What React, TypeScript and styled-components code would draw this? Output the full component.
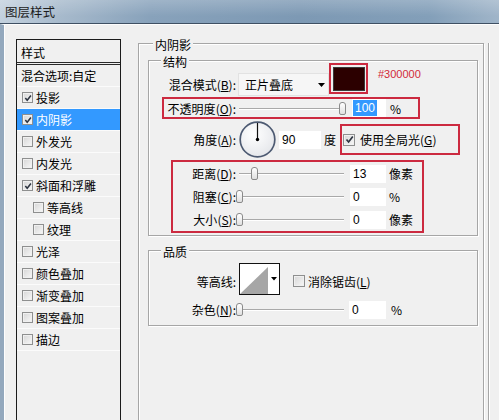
import React, { ReactElement, ReactNode } from "react";
import styled, { createGlobalStyle } from "styled-components";

const GlobalStyle = createGlobalStyle`
  html, body {
    margin: 0;
    padding: 0;
    background: #f0f0f0;
  }
  body {
    width: 499px;
    height: 420px;
    overflow: hidden;
    font-family: "Noto Sans CJK SC", "Liberation Sans", sans-serif;
    font-size: 12px;
    color: #000;
  }
  u {
    text-underline-offset: 1px;
  }
`;

const Window = styled.div`
  width: 499px;
  height: 420px;
  display: flex;
  flex-direction: column;
  overflow: hidden;
`;

const TitleBar = styled.div`
  height: 23px;
  flex-shrink: 0;
  display: flex;
  align-items: center;
  padding-left: 5px;
  font-size: 12.5px;
  color: #1c1c1c;
  border-bottom: 1px solid #3f5063;
  background:
    linear-gradient(to bottom, rgba(255, 255, 255, 0.2), rgba(255, 255, 255, 0) 70%),
    linear-gradient(to right, #c3d1de 0%, #a7bacc 12%, #88a2bb 30%, #7d99b4 60%, #839fb9 86%, #a0b5c9 100%);
`;

const Body = styled.div`
  flex: 1;
  display: flex;
  min-height: 0;
  border-left: 4px solid #93a8bd;
  border-top: 1px solid #fdfdfd;
  box-shadow: inset 1px 0 0 #fdfdfd;
  background: #f0f0f0;
`;

/* ---------- left style list ---------- */

const StyleList = styled.div`
  width: 103px;
  margin: 14px 0 0 12px;
  border: 1px solid #1b1b1b;
  border-bottom: none;
  flex-shrink: 0;
`;

const ListHeader = styled.div`
  height: 22px;
  line-height: 26px;
  padding-left: 4px;
  border-bottom: 3px double #2a2a2a;
`;

const ListRow = styled.div<{ $selected?: boolean; $indent: number }>`
  height: 21px;
  line-height: 21px;
  display: flex;
  align-items: center;
  gap: 3px;
  padding-left: ${(p) => p.$indent}px;
  border-bottom: 1px solid #fbfbfb;
  background: ${(p) => (p.$selected ? "#3399ff" : "transparent")};
  color: ${(p) => (p.$selected ? "#fff" : "#000")};
  white-space: nowrap;
`;

const Box = styled.span<{ $size: number }>`
  width: ${(p) => p.$size - 2}px;
  height: ${(p) => p.$size - 2}px;
  flex-shrink: 0;
  display: inline-flex;
  align-items: center;
  justify-content: center;
  border: 1px solid #8e8f8f;
  background: linear-gradient(135deg, #d6d6d6, #f8f8f8);
  box-shadow: inset 0 0 0 1px #f0f0f0;
`;

function Checkbox({ checked, size }: { checked?: boolean; size: number }): ReactElement {
  return (
    <Box $size={size}>
      {checked && (
        <svg width={size - 3} height={size - 3} viewBox="0 0 9 9">
          <polyline points="1.5,4.5 3.6,7 7.8,1.6" fill="none" stroke="#2d3440" strokeWidth="1.7" />
        </svg>
      )}
    </Box>
  );
}

/* ---------- right panel ---------- */

const Main = styled.div`
  display: flex;
  margin: 18px 0 0 17px;
`;

const Group = styled.div`
  display: flex;
  flex-direction: column;
  border: 1px solid #a6a6a6;
  box-shadow: inset 1px 1px 0 #fff, 1px 1px 0 #fff;
`;

const OuterGroup = styled(Group)`
  width: 330px;
  min-height: 420px;
  padding: 0 5px 0 9px;
`;

const InnerGroup = styled(Group)<{ $top: number; $bottom: number }>`
  margin-top: ${(p) => p.$top}px;
  padding-bottom: ${(p) => p.$bottom}px;
`;

const Legend = styled.div<{ $offset: number }>`
  align-self: flex-start;
  height: 16px;
  line-height: 16px;
  margin: -7px 0 -9px ${(p) => p.$offset}px;
  padding: 0 2px;
  background: #f0f0f0;
`;

const RightRail = styled.div`
  width: 0;
  margin-left: 4px;
  border-left: 1px solid #a6a6a6;
  box-shadow: 1px 0 0 #fff;
`;

const Label = styled.div<{ $width: number; $lift?: number }>`
  width: ${(p) => p.$width}px;
  flex-shrink: 0;
  text-align: right;
  white-space: nowrap;
  padding-top: ${(p) => p.$lift ?? 0}px;
`;

const Mark = styled.div`
  border: 2px solid #cc2a40;
  display: flex;
  align-items: center;
  flex-shrink: 0;
`;

const BlendRow = styled.div`
  display: flex;
  align-items: flex-end;
  margin-top: 2px;
`;

const BlendLabel = styled(Label)`
  line-height: 23px;
`;

const Dropdown = styled.div`
  width: 83px;
  height: 21px;
  margin-left: 2px;
  padding-left: 6px;
  display: flex;
  align-items: center;
  justify-content: space-between;
  border: 1px solid #e2e2e2;
  background: #f6f6f6;
`;

const SwatchMark = styled(Mark)`
  width: 35px;
  height: 27px;
  margin-bottom: 2px;
  justify-content: center;
`;

const Swatch = styled.div<{ $color: string }>`
  width: 30px;
  height: 22px;
  background: ${(p) => p.$color};
  border: 1px solid #3a3a3a;
`;

const Annotation = styled.div`
  align-self: flex-start;
  margin-left: 10px;
  line-height: 22px;
  font-family: "Liberation Sans", Arial, sans-serif;
  font-size: 11px;
  color: #d22a38;
`;

const OpacityMark = styled(Mark)`
  width: 254px;
  height: 18px;
  margin: 1px 0 0 13px;
`;

const AngleRow = styled.div`
  display: flex;
  align-items: center;
  height: 37px;
  margin-top: 2px;
`;

const Dial = styled.svg`
  margin-left: 3px;
  flex-shrink: 0;
`;

const GlobalMark = styled(Mark)`
  width: 115px;
  height: 27px;
  margin-left: 4px;
  padding-left: 1px;
  gap: 5px;
`;

const DistanceMark = styled(Mark)`
  width: 249px;
  flex-direction: column;
  align-items: stretch;
  margin: 2px 0 0 22px;
`;

const SliderRow = styled.div`
  display: flex;
  align-items: center;
  height: 23px;
`;

const SliderTrack = styled.div<{ $width: number }>`
  position: relative;
  width: ${(p) => p.$width}px;
  height: 13px;
  flex-shrink: 0;
  &::before {
    content: "";
    position: absolute;
    left: 3px;
    right: 2px;
    top: 6px;
    height: 1px;
    background: #a9a9a9;
    box-shadow: 0 1px 0 #fff;
  }
`;

const SliderThumb = styled.span`
  position: absolute;
  top: 0;
  width: 5px;
  height: 11px;
  border: 1px solid #8a8a8a;
  border-radius: 3px 3px 2px 2px;
  background: linear-gradient(#ffffff, #e0e0e0);
`;

function Slider({ width, value }: { width: number; value: number }): ReactElement {
  return (
    <SliderTrack $width={width}>
      <SliderThumb style={{ left: Math.round(value * (width - 7)) }} />
    </SliderTrack>
  );
}

const ValueBox = styled.div<{ $width: number; $gap: number }>`
  width: ${(p) => p.$width - 3}px;
  height: 18px;
  line-height: 18px;
  margin-left: ${(p) => p.$gap}px;
  padding-left: 3px;
  flex-shrink: 0;
  background: #fff;
  font-family: "Liberation Sans", Arial, sans-serif;
  font-size: 12px;
`;

const Selected = styled.span`
  margin-left: -2px;
  padding: 1px 2px;
  background: #3399ff;
  color: #fff;
`;

const Unit = styled.span<{ $gap: number }>`
  margin-left: ${(p) => p.$gap}px;
  white-space: nowrap;
`;

const ContourRow = styled.div`
  display: flex;
  align-items: center;
  margin-top: 12px;
`;

const Contour = styled.svg`
  margin-left: 3px;
  flex-shrink: 0;
`;

const CheckLabel = styled.label<{ $gap: number }>`
  display: flex;
  align-items: center;
  gap: 3px;
  margin-left: ${(p) => p.$gap}px;
  padding-top: 4px;
  white-space: nowrap;
`;

const NoiseRow = styled(SliderRow)`
  margin-top: 3px;
`;

type StyleItem = { name: string; checked?: boolean; indent?: boolean; selected?: boolean };

const styleItems: StyleItem[] = [
  { name: "投影", checked: true },
  { name: "内阴影", checked: true, selected: true },
  { name: "外发光" },
  { name: "内发光" },
  { name: "斜面和浮雕", checked: true },
  { name: "等高线", indent: true },
  { name: "纹理", indent: true },
  { name: "光泽" },
  { name: "颜色叠加" },
  { name: "渐变叠加" },
  { name: "图案叠加" },
  { name: "描边" },
];

function Key({ text, k, colon = true }: { text: string; k: string; colon?: boolean }): ReactNode {
  return (
    <span>
      {text}(<u>{k}</u>){colon ? ":" : ""}
    </span>
  );
}

export default function App(): ReactElement {
  return (
    <>
      <GlobalStyle />
      <Window>
        <TitleBar>图层样式</TitleBar>
        <Body>
          <StyleList>
            <ListHeader>样式</ListHeader>
            <ListRow $indent={4}>混合选项:自定</ListRow>
            {styleItems.map((item) => (
              <ListRow key={item.name} $indent={item.indent ? 16 : 5} $selected={item.selected}>
                <Checkbox size={11} checked={item.checked} />
                {item.name}
              </ListRow>
            ))}
          </StyleList>

          <Main>
            <OuterGroup>
              <Legend $offset={5}>内阴影</Legend>

              <InnerGroup $top={16} $bottom={2}>
                <Legend $offset={12}>结构</Legend>

                <BlendRow>
                  <BlendLabel $width={87}>
                    <Key text="混合模式" k="B" />
                  </BlendLabel>
                  <Dropdown>
                    正片叠底
                    <svg width="11" height="6" viewBox="0 0 11 6">
                      <polygon points="1,1 8,1 4.5,5" fill="#000" />
                    </svg>
                  </Dropdown>
                  <SwatchMark>
                    <Swatch $color="#2c0000" />
                  </SwatchMark>
                  <Annotation>#300000</Annotation>
                </BlendRow>

                <OpacityMark>
                  <Label $width={72}>
                    <Key text="不透明度" k="O" />
                  </Label>
                  <Slider width={110} value={1} />
                  <ValueBox $width={34} $gap={6}>
                    <Selected>100</Selected>
                  </ValueBox>
                  <Unit $gap={4}>%</Unit>
                </OpacityMark>

                <AngleRow>
                  <Label $width={87}>
                    <Key text="角度" k="A" />
                  </Label>
                  <Dial width="37" height="37" viewBox="0 0 37 37">
                    <defs>
                      <radialGradient id="dialFill" cx="0.4" cy="0.35" r="0.7">
                        <stop offset="0" stopColor="#ffffff" />
                        <stop offset="1" stopColor="#e4e6ea" />
                      </radialGradient>
                    </defs>
                    <circle cx="18.5" cy="18.5" r="17.3" fill="url(#dialFill)" stroke="#4d5a72" strokeWidth="1.7" />
                    <line x1="18.5" y1="18.5" x2="18.5" y2="2" stroke="#111" strokeWidth="1.2" />
                    <circle cx="18.5" cy="18.5" r="1.7" fill="#000" />
                  </Dial>
                  <ValueBox $width={42} $gap={3}>90</ValueBox>
                  <Unit $gap={3}>度</Unit>
                  <GlobalMark>
                    <Checkbox size={12} checked />
                    <Key text="使用全局光" k="G" colon={false} />
                  </GlobalMark>
                </AngleRow>

                <DistanceMark>
                  <SliderRow>
                    <Label $width={63}>
                      <Key text="距离" k="D" />
                    </Label>
                    <Slider width={110} value={0.15} />
                    <ValueBox $width={36} $gap={4}>13</ValueBox>
                    <Unit $gap={3}>像素</Unit>
                  </SliderRow>
                  <SliderRow>
                    <Label $width={63}>
                      <Key text="阻塞" k="C" />
                    </Label>
                    <Slider width={110} value={0} />
                    <ValueBox $width={36} $gap={4}>0</ValueBox>
                    <Unit $gap={3}>%</Unit>
                  </SliderRow>
                  <SliderRow>
                    <Label $width={63}>
                      <Key text="大小" k="S" />
                    </Label>
                    <Slider width={110} value={0} />
                    <ValueBox $width={36} $gap={4}>0</ValueBox>
                    <Unit $gap={3}>像素</Unit>
                  </SliderRow>
                </DistanceMark>
              </InnerGroup>

              <InnerGroup $top={14} $bottom={4}>
                <Legend $offset={12}>品质</Legend>

                <ContourRow>
                  <Label $width={87} $lift={4}>
                    等高线:
                  </Label>
                  <Contour width="41" height="32" viewBox="0 0 41 32">
                    <rect x="0.5" y="0.5" width="40" height="31" fill="#fff" stroke="#111" />
                    <polygon points="1,31 29,4 29,31" fill="#a6a6a6" />
                    <polygon points="32,14 38,14 35,17.5" fill="#000" />
                  </Contour>
                  <CheckLabel $gap={13}>
                    <Checkbox size={12} />
                    <Key text="消除锯齿" k="L" colon={false} />
                  </CheckLabel>
                </ContourRow>

                <NoiseRow>
                  <Label $width={87}>
                    <Key text="杂色" k="N" />
                  </Label>
                  <Slider width={110} value={0} />
                  <ValueBox $width={37} $gap={3}>0</ValueBox>
                  <Unit $gap={5}>%</Unit>
                </NoiseRow>
              </InnerGroup>
            </OuterGroup>
            <RightRail />
          </Main>
        </Body>
      </Window>
    </>
  );
}
